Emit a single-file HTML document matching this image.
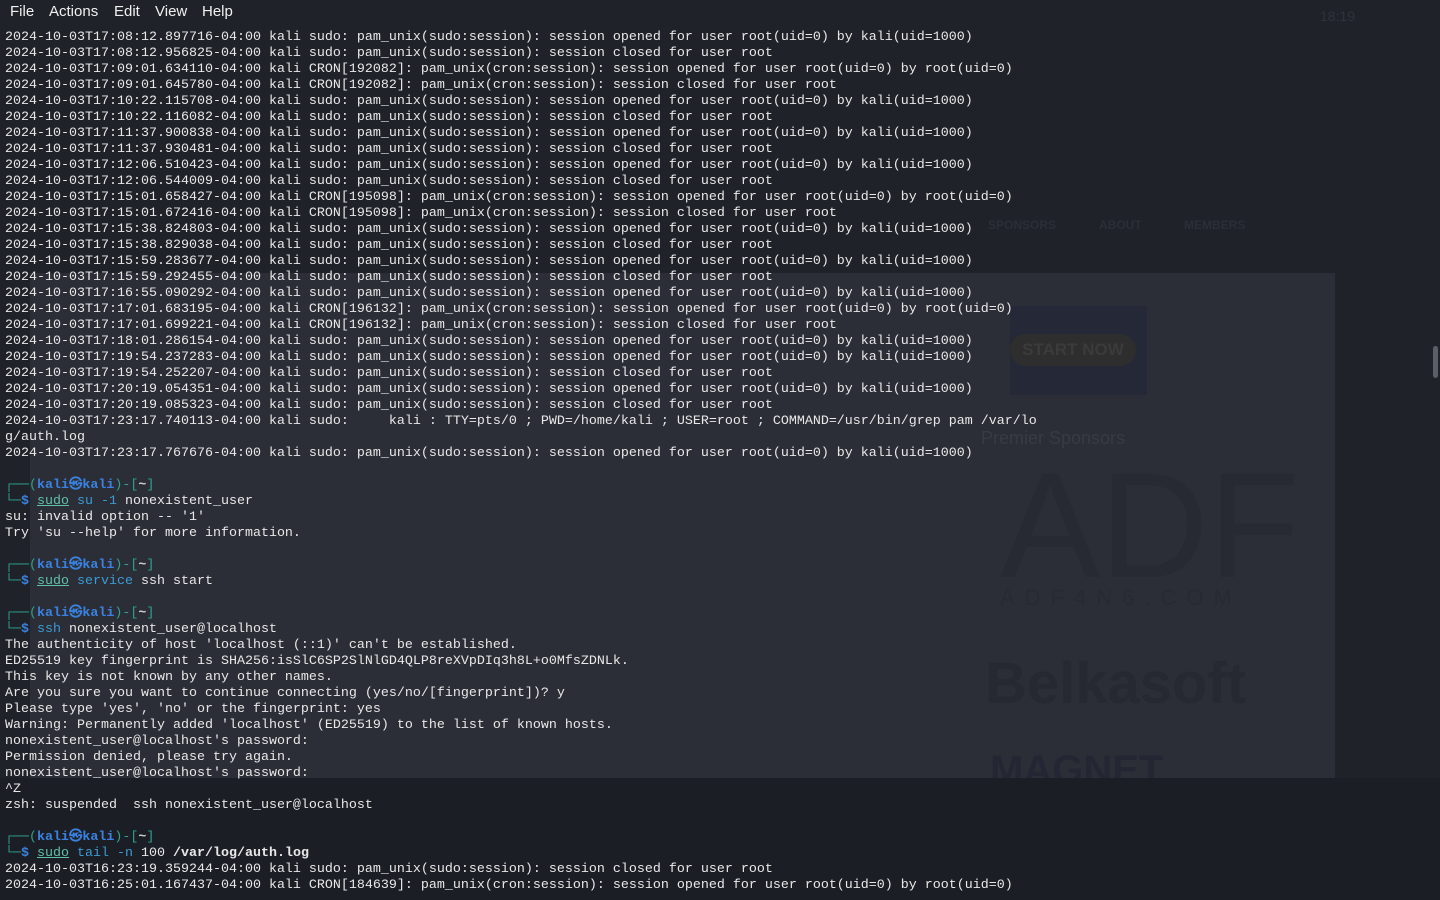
<!DOCTYPE html>
<html><head><meta charset="utf-8"><style>
html,body{margin:0;padding:0;width:1440px;height:900px;overflow:hidden;background:#1e2128;}
.bg1{position:absolute;left:0;top:0;width:1440px;height:900px;background:#1f2229;}
.bg2{position:absolute;left:30px;top:273px;width:1305px;height:505px;background:#2b2e36;}
.bg3{position:absolute;left:0;top:778px;width:1440px;height:122px;background:#1b1e25;}
.menu{position:absolute;left:0;top:0;height:24px;width:1440px;font:15px "Liberation Sans",sans-serif;color:#f0f0f0;}
.menu span{position:absolute;top:3px;}
.ghost{position:absolute;color:#33363f;font-family:"Liberation Sans",sans-serif;}
pre{position:absolute;left:5px;top:30px;margin:0;font:13.33px/16px "Liberation Mono","DejaVu Sans Mono",monospace;color:#e8e8e8;white-space:pre;}
.t{color:#2ea38e}.b{color:#3b82e0;font-weight:bold}.d{color:#3b82e0;font-weight:bold}
.u{color:#5fc0a8;text-decoration:underline}.c{color:#3b9bd3}.p{color:#d0d0d0}
.sb{position:absolute;left:1433px;top:346px;width:5px;height:32px;background:#5a5e66;border-radius:3px;}
</style></head><body>
<div class="bg1"></div><div class="bg2"></div><div class="bg3"></div>
<div class="ghost" style="left:1010px;top:306px;width:137px;height:89px;background:#252836"></div>
<div class="ghost" style="left:1010px;top:334px;width:126px;height:32px;border-radius:16px;background:#2f2e2e;color:#3c3b3b;font-weight:bold;font-size:17px;line-height:32px;text-align:center">START NOW</div>
<div class="ghost" style="left:981px;top:428px;font-size:18px;color:#383b44">Premier Sponsors</div>
<div class="ghost" style="left:1000px;top:455px;font-size:150px;line-height:140px;color:#272a33">ADF</div>
<div class="ghost" style="left:1000px;top:585px;font-size:22px;letter-spacing:10px;color:#272a33">ADF4N6.COM</div>
<div class="ghost" style="left:985px;top:650px;font-size:58px;font-weight:bold;color:#262931">Belkasoft</div>
<div class="ghost" style="left:990px;top:748px;font-size:40px;font-weight:bold;color:#242733;height:30px;overflow:hidden">MAGNET</div>
<div class="ghost" style="left:988px;top:218px;font-size:12px;font-weight:bold;color:#2b2e36">SPONSORS</div>
<div class="ghost" style="left:1099px;top:218px;font-size:12px;font-weight:bold;color:#2b2e36">ABOUT</div>
<div class="ghost" style="left:1184px;top:218px;font-size:12px;font-weight:bold;color:#2b2e36">MEMBERS</div>
<div class="ghost" style="left:1320px;top:8px;font-size:14px;color:#2e333c">18:19</div>
<div class="menu"><span style="left:10px">File</span><span style="left:49px">Actions</span><span style="left:114px">Edit</span><span style="left:155px">View</span><span style="left:202px">Help</span></div>
<div class="sb"></div>
<pre>2024-10-03T17:08:12.897716-04:00 kali sudo: pam_unix(sudo:session): session opened for user root(uid=0) by kali(uid=1000)
2024-10-03T17:08:12.956825-04:00 kali sudo: pam_unix(sudo:session): session closed for user root
2024-10-03T17:09:01.634110-04:00 kali CRON[192082]: pam_unix(cron:session): session opened for user root(uid=0) by root(uid=0)
2024-10-03T17:09:01.645780-04:00 kali CRON[192082]: pam_unix(cron:session): session closed for user root
2024-10-03T17:10:22.115708-04:00 kali sudo: pam_unix(sudo:session): session opened for user root(uid=0) by kali(uid=1000)
2024-10-03T17:10:22.116082-04:00 kali sudo: pam_unix(sudo:session): session closed for user root
2024-10-03T17:11:37.900838-04:00 kali sudo: pam_unix(sudo:session): session opened for user root(uid=0) by kali(uid=1000)
2024-10-03T17:11:37.930481-04:00 kali sudo: pam_unix(sudo:session): session closed for user root
2024-10-03T17:12:06.510423-04:00 kali sudo: pam_unix(sudo:session): session opened for user root(uid=0) by kali(uid=1000)
2024-10-03T17:12:06.544009-04:00 kali sudo: pam_unix(sudo:session): session closed for user root
2024-10-03T17:15:01.658427-04:00 kali CRON[195098]: pam_unix(cron:session): session opened for user root(uid=0) by root(uid=0)
2024-10-03T17:15:01.672416-04:00 kali CRON[195098]: pam_unix(cron:session): session closed for user root
2024-10-03T17:15:38.824803-04:00 kali sudo: pam_unix(sudo:session): session opened for user root(uid=0) by kali(uid=1000)
2024-10-03T17:15:38.829038-04:00 kali sudo: pam_unix(sudo:session): session closed for user root
2024-10-03T17:15:59.283677-04:00 kali sudo: pam_unix(sudo:session): session opened for user root(uid=0) by kali(uid=1000)
2024-10-03T17:15:59.292455-04:00 kali sudo: pam_unix(sudo:session): session closed for user root
2024-10-03T17:16:55.090292-04:00 kali sudo: pam_unix(sudo:session): session opened for user root(uid=0) by kali(uid=1000)
2024-10-03T17:17:01.683195-04:00 kali CRON[196132]: pam_unix(cron:session): session opened for user root(uid=0) by root(uid=0)
2024-10-03T17:17:01.699221-04:00 kali CRON[196132]: pam_unix(cron:session): session closed for user root
2024-10-03T17:18:01.286154-04:00 kali sudo: pam_unix(sudo:session): session opened for user root(uid=0) by kali(uid=1000)
2024-10-03T17:19:54.237283-04:00 kali sudo: pam_unix(sudo:session): session opened for user root(uid=0) by kali(uid=1000)
2024-10-03T17:19:54.252207-04:00 kali sudo: pam_unix(sudo:session): session closed for user root
2024-10-03T17:20:19.054351-04:00 kali sudo: pam_unix(sudo:session): session opened for user root(uid=0) by kali(uid=1000)
2024-10-03T17:20:19.085323-04:00 kali sudo: pam_unix(sudo:session): session closed for user root
2024-10-03T17:23:17.740113-04:00 kali sudo:     kali : TTY=pts/0 ; PWD=/home/kali ; USER=root ; COMMAND=/usr/bin/grep pam /var/lo
g/auth.log
2024-10-03T17:23:17.767676-04:00 kali sudo: pam_unix(sudo:session): session opened for user root(uid=0) by kali(uid=1000)

<span class="t">┌──(</span><span class="b">kali㉿kali</span><span class="t">)-[</span><span class="p" style="font-weight:bold">~</span><span class="t">]</span>
<span class="t">└─</span><span class="d">$</span> <span class="u">sudo</span> <span class="c">su</span> <span class="c">-1</span> nonexistent_user
su: invalid option -- '1'
Try 'su --help' for more information.

<span class="t">┌──(</span><span class="b">kali㉿kali</span><span class="t">)-[</span><span class="p" style="font-weight:bold">~</span><span class="t">]</span>
<span class="t">└─</span><span class="d">$</span> <span class="u">sudo</span> <span class="c">service</span> ssh start

<span class="t">┌──(</span><span class="b">kali㉿kali</span><span class="t">)-[</span><span class="p" style="font-weight:bold">~</span><span class="t">]</span>
<span class="t">└─</span><span class="d">$</span> <span class="c">ssh</span> nonexistent_user@localhost
The authenticity of host 'localhost (::1)' can't be established.
ED25519 key fingerprint is SHA256:isSlC6SP2SlNlGD4QLP8reXVpDIq3h8L+o0MfsZDNLk.
This key is not known by any other names.
Are you sure you want to continue connecting (yes/no/[fingerprint])? y
Please type 'yes', 'no' or the fingerprint: yes
Warning: Permanently added 'localhost' (ED25519) to the list of known hosts.
nonexistent_user@localhost's password: 
Permission denied, please try again.
nonexistent_user@localhost's password: 
^Z
zsh: suspended  ssh nonexistent_user@localhost

<span class="t">┌──(</span><span class="b">kali㉿kali</span><span class="t">)-[</span><span class="p" style="font-weight:bold">~</span><span class="t">]</span>
<span class="t">└─</span><span class="d">$</span> <span class="u">sudo</span> <span class="c">tail</span> <span class="c">-n</span> 100 <b>/var/log/auth.log</b>
2024-10-03T16:23:19.359244-04:00 kali sudo: pam_unix(sudo:session): session closed for user root
2024-10-03T16:25:01.167437-04:00 kali CRON[184639]: pam_unix(cron:session): session opened for user root(uid=0) by root(uid=0)</pre>
</body></html>
